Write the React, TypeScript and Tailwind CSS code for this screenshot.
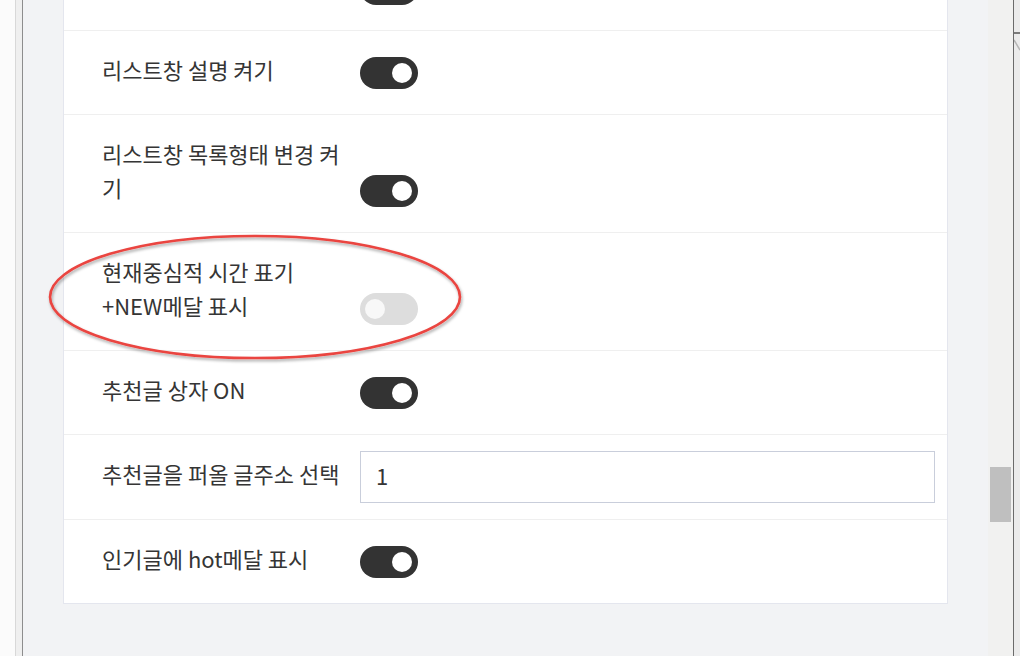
import React from "react";

const FONT = { fontFamily: '"Noto Sans CJK KR", "Noto Sans", sans-serif' };

function Toggle({ on }: { on: boolean }) {
  return on ? (
    <div className="relative w-[58px] h-[32px] rounded-full bg-[#333333]">
      <div className="absolute right-[6px] top-[6px] w-[20px] h-[20px] rounded-full bg-white" />
    </div>
  ) : (
    <div className="relative w-[58px] h-[32px] rounded-full bg-[#dddddd]">
      <div className="absolute left-[5px] top-[6px] w-[20px] h-[20px] rounded-full bg-[#f8f8f8]" />
    </div>
  );
}

function ToggleRow({ label, on, last }: { label: React.ReactNode; on: boolean; last?: boolean }) {
  return (
    <div
      className={`flex items-end gap-[20px] pl-[38px] pr-[12px] pt-[25px] pb-[24px] ${
        last ? "" : "border-b border-[#efefef]"
      }`}
    >
      <div className="w-[238px] min-h-[34px] -mt-[4px] mb-[4px] text-[22px] leading-[34px] text-[#353535]">
        {label}
      </div>
      <div className="h-[34px] flex items-center">
        <Toggle on={on} />
      </div>
    </div>
  );
}

export default function App() {
  return (
    <div className="relative w-[1020px] h-[656px] overflow-hidden flex bg-[#f2f3f5]" style={FONT}>
      {/* left window frame */}
      <div className="w-[15px] h-full bg-[#fbfbfb]" />
      <div className="w-px h-full bg-[#d8d8d8]" />
      <div className="w-[6px] h-full bg-[#efefef]" />
      <div className="w-px h-full bg-[#8d8d8d]" />

      {/* main scrolled area */}
      <div className="w-[965px] h-full bg-[#f2f3f5] px-[40px] overflow-hidden">
        <div className="-mt-[54px] bg-white border border-[#e4e6ee]">
          <ToggleRow label="" on={true} />
          <ToggleRow label="리스트창 설명 켜기" on={true} />
          <ToggleRow label="리스트창 목록형태 변경 켜기" on={true} />
          <ToggleRow
            label={
              <>
                현재중심적 시간 표기
                <br />
                +NEW메달 표시
              </>
            }
            on={false}
          />
          <ToggleRow label="추천글 상자 ON" on={true} />
          <div className="flex items-center gap-[20px] pl-[38px] pr-[12px] py-[16px] border-b border-[#efefef]">
            <div className="w-[238px] -mt-[4px] mb-[4px] text-[22px] leading-[34px] text-[#353535]">
              추천글을 퍼올 글주소 선택
            </div>
            <div className="flex-1 h-[52px] border border-[#c9cedb] flex items-center pl-[15px] pb-[4px] text-[22px] text-[#353535]">
              1
            </div>
          </div>
          <ToggleRow label="인기글에 hot메달 표시" on={true} last />
        </div>
      </div>

      {/* scrollbar */}
      <div className="w-[25px] h-full bg-[#f1f1f0] pt-[467px] px-[2px]">
        <div className="h-[55px] bg-[#bfbfbf]" />
      </div>
      <div className="w-px h-full bg-[#6b6b6b]" />
      <div className="w-[6px] h-full bg-[#ebebeb] pt-[32px]">
        <div className="h-[2px] bg-[#7a7a7a]" />
        <svg width="6" height="20" className="block">
          <line x1="0" y1="6" x2="6" y2="16" stroke="#b5b5b5" strokeWidth="1.5" />
        </svg>
      </div>

      {/* red annotation ellipse */}
      <svg
        className="absolute left-0 top-0 pointer-events-none"
        width="1020"
        height="656"
        viewBox="0 0 1020 656"
      >
        <defs>
          <filter id="sh" x="-10%" y="-20%" width="120%" height="140%">
            <feDropShadow dx="1" dy="2" stdDeviation="1.5" floodColor="#000" floodOpacity="0.35" />
          </filter>
        </defs>
        <ellipse
          cx="255"
          cy="297"
          rx="205"
          ry="61"
          fill="none"
          stroke="#ea4440"
          strokeWidth="2.6"
          filter="url(#sh)"
        />
      </svg>
    </div>
  );
}
